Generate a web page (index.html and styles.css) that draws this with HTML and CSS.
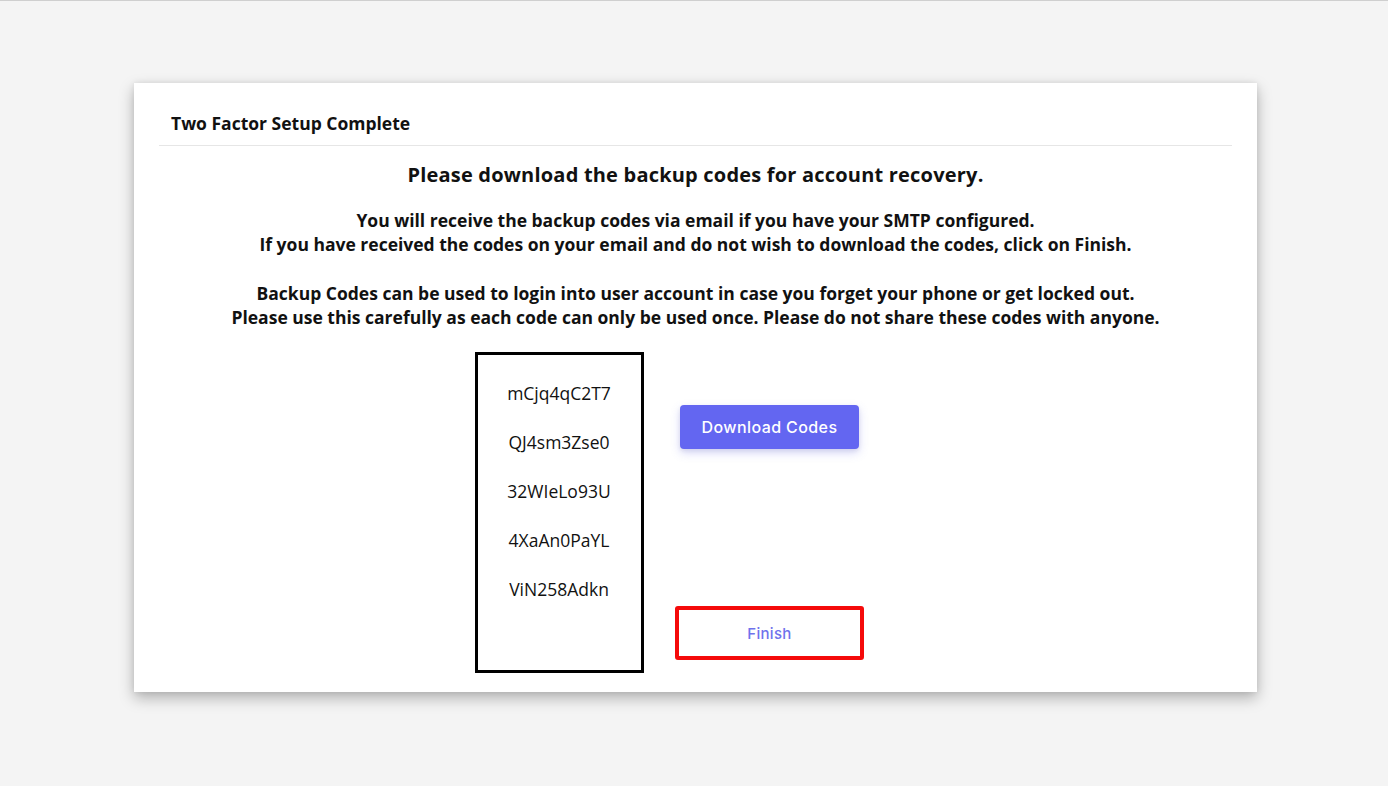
FILE: index.html
```html
<!DOCTYPE html>
<html lang="en">
<head>
<meta charset="utf-8">
<title>Two Factor Setup Complete</title>
<link rel="stylesheet" href="styles.css">
</head>
<body>
<div class="card">
  <div class="card-header">Two Factor Setup Complete</div>
  <div class="card-body">
    <h2 class="title">Please download the backup codes for account recovery.</h2>
    <p class="info">You will receive the backup codes via email if you have your SMTP configured.<br>If you have received the codes on your email and do not wish to download the codes, click on Finish.</p>
    <p class="info">Backup Codes can be used to login into user account in case you forget your phone or get locked out.<br>Please use this carefully as each code can only be used once. Please do not share these codes with anyone.</p>
    <div class="codes-row">
      <div class="codes-box">
        <div class="code">mCjq4qC2T7</div>
        <div class="code">QJ4sm3Zse0</div>
        <div class="code">32WIeLo93U</div>
        <div class="code">4XaAn0PaYL</div>
        <div class="code">ViN258Adkn</div>
      </div>
      <div class="actions">
        <button class="btn-primary">Download Codes</button>
        <button class="btn-finish">Finish</button>
      </div>
    </div>
  </div>
</div>
</body>
</html>
```
FILE: styles.css
```css
html, body {
  margin: 0;
  padding: 0;
}
body {
  background: #f4f4f4;
  border-top: 1px solid #cfcfcf;
  font-family: "Open Sans", "Liberation Sans", sans-serif;
  color: #111;
  height: 785px;
  box-sizing: border-box;
  padding-top: 82px;
  padding-left: 134px;
}
.card {
  width: 1123px;
  height: 609px;
  background: #fff;
  box-shadow: 0 6px 14px rgba(0,0,0,0.28), 0 0 6px rgba(0,0,0,0.08);
  box-sizing: border-box;
  padding: 0 25px;
}
.card-header {
  padding: 28px 0 0 12px;
  height: 63px;
  box-sizing: border-box;
  font-size: 17.5px;
  font-weight: 700;
  line-height: 24px;
  border-bottom: 1px solid #e6e6e6;
}
.card-body {
  text-align: center;
}
.title {
  margin: 15px 0 0;
  font-size: 20px;
  font-weight: 700;
  line-height: 28px;
  letter-spacing: 0.2px;
}
.info {
  margin: 19px 0 0;
  font-size: 17.5px;
  font-weight: 700;
  line-height: 24px;
}
.info + .info {
  margin-top: 25px;
}
.codes-row {
  display: flex;
  justify-content: center;
  padding-right: 52px;
  margin-top: 23px;
}
.codes-box {
  width: 169px;
  height: 321px;
  box-sizing: border-box;
  border: 3px solid #000;
  padding-top: 26px;
  display: flex;
  flex-direction: column;
  gap: 25px;
}
.code {
  font-size: 17.5px;
  line-height: 24px;
  font-weight: 400;
  color: #111;
}
.actions {
  margin-left: 31px;
  width: 190px;
  display: flex;
  flex-direction: column;
  align-items: center;
}
.btn-primary {
  margin-top: 53px;
  width: 179px;
  height: 44px;
  border: none;
  border-radius: 4px;
  background: #6366f1;
  color: #fff;
  font-family: "Inter", "Open Sans", sans-serif;
  font-size: 16px;
  font-weight: 500;
  letter-spacing: 0.4px;
  box-shadow: 0 4px 10px rgba(99,102,241,0.25), 0 2px 4px rgba(0,0,0,0.08);
}
.btn-finish {
  margin-top: auto;
  margin-bottom: 13px;
  width: 189px;
  height: 54px;
  border: 4px solid #f50a0a;
  border-radius: 3px;
  background: #fff;
  color: #6f72ec;
  font-family: "Inter", "Open Sans", sans-serif;
  font-size: 15px;
  font-weight: 500;
  letter-spacing: 0.3px;
}
```
